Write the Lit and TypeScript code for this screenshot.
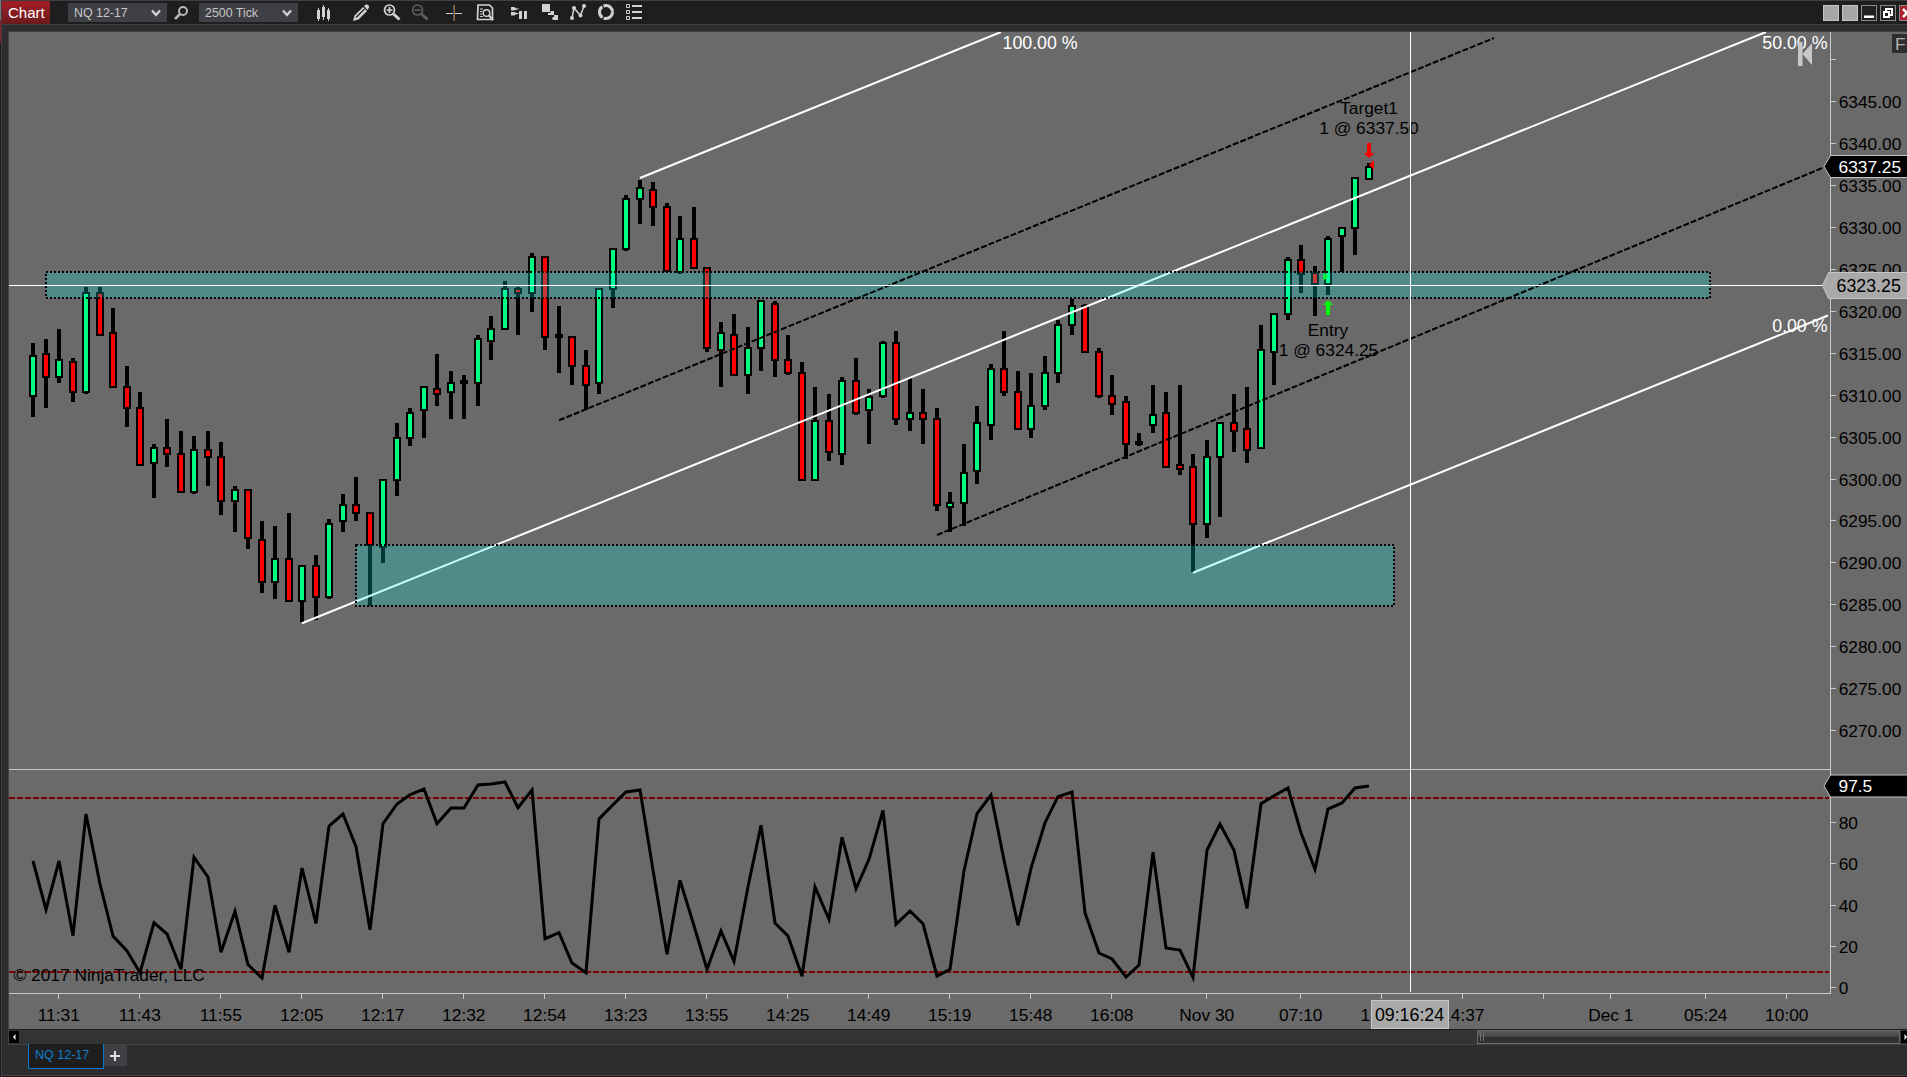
import { LitElement, html, svg, css } from "lit";
import { customElement, property } from "lit/decorators.js";

type Candle = [high: number, top: number, bottom: number, low: number, kind: "u" | "d" | "n"];

// Vertical positions of each bar on the price panel: high, body top, body bottom, low.
const CANDLES: Candle[] = [
  [343, 355, 397, 417, "u"], [339, 353, 378, 408, "d"], [329, 359, 378, 383, "u"], [358, 361, 393, 402, "d"],
  [287, 292, 393, 394, "u"], [287, 292, 336, 336, "d"], [308, 332, 388, 388, "d"], [366, 386, 409, 427, "d"],
  [392, 407, 466, 466, "d"], [444, 447, 464, 498, "u"], [419, 447, 455, 467, "d"], [431, 453, 493, 493, "d"],
  [436, 449, 493, 494, "u"], [431, 449, 458, 486, "d"], [442, 456, 502, 515, "d"], [486, 489, 502, 532, "u"],
  [489, 489, 539, 549, "d"], [521, 539, 583, 593, "d"], [526, 558, 583, 599, "u"], [513, 558, 602, 602, "d"],
  [565, 565, 602, 622, "u"], [555, 565, 598, 620, "d"], [519, 523, 598, 599, "u"], [494, 504, 522, 532, "u"],
  [477, 504, 514, 521, "d"], [512, 512, 546, 606, "d"], [479, 479, 548, 563, "u"], [423, 437, 481, 496, "u"],
  [408, 412, 439, 446, "u"], [386, 386, 411, 438, "u"], [354, 388, 395, 406, "d"], [371, 382, 393, 419, "u"],
  [375, 380, 384, 419, "n"], [335, 338, 384, 406, "u"], [316, 328, 342, 360, "u"], [281, 288, 330, 330, "u"],
  [287, 288, 294, 335, "d"], [253, 256, 294, 312, "u"], [256, 256, 338, 350, "d"], [306, 334, 338, 373, "n"],
  [336, 336, 367, 385, "d"], [350, 365, 386, 410, "d"], [288, 288, 384, 394, "u"], [248, 248, 290, 308, "u"],
  [195, 198, 250, 251, "u"], [180, 187, 200, 224, "u"], [182, 189, 208, 226, "d"], [203, 206, 272, 272, "d"],
  [216, 238, 273, 274, "u"], [207, 238, 269, 269, "d"], [267, 267, 349, 352, "d"], [322, 332, 351, 387, "u"],
  [314, 334, 376, 376, "d"], [327, 347, 376, 394, "u"], [300, 300, 349, 371, "u"], [301, 303, 361, 377, "d"],
  [335, 359, 374, 375, "d"], [362, 372, 481, 481, "d"], [387, 420, 481, 481, "u"], [394, 420, 453, 461, "d"],
  [377, 380, 455, 465, "u"], [358, 380, 414, 415, "d"], [389, 396, 411, 444, "u"], [341, 342, 397, 398, "u"],
  [331, 342, 420, 425, "d"], [378, 412, 420, 431, "u"], [389, 412, 420, 444, "d"], [408, 418, 506, 511, "d"],
  [492, 502, 508, 532, "u"], [444, 472, 504, 526, "u"], [406, 422, 472, 484, "u"], [364, 368, 426, 440, "u"],
  [331, 368, 393, 396, "d"], [371, 391, 430, 430, "d"], [373, 405, 430, 438, "u"], [356, 372, 407, 410, "u"],
  [320, 324, 374, 383, "u"], [299, 305, 326, 335, "u"], [304, 305, 353, 353, "d"], [348, 351, 397, 398, "d"],
  [375, 395, 405, 415, "d"], [396, 401, 445, 459, "d"], [433, 441, 445, 446, "n"], [385, 414, 426, 433, "u"],
  [392, 412, 468, 468, "d"], [385, 464, 470, 475, "d"], [454, 466, 525, 572, "d"], [440, 456, 525, 538, "u"],
  [422, 422, 458, 517, "u"], [394, 422, 432, 452, "d"], [387, 428, 451, 463, "d"], [325, 349, 449, 449, "u"],
  [313, 313, 353, 385, "u"], [257, 259, 315, 320, "u"], [245, 259, 275, 293, "d"], [266, 272, 285, 316, "d"],
  [236, 238, 285, 295, "u"], [227, 227, 237, 272, "u"], [177, 177, 229, 255, "u"], [163, 166, 180, 180, "u"],
];

// Oscillator samples, in thirds of a pixel below the top of the lower panel.
const OSC = [
  303, 449, 303, 527, 162, 372, 528, 573, 638, 488, 522, 628, 292, 351, 577, 454, 614, 654, 436, 577,
  324, 490, 198, 162, 260, 509, 191, 132, 104, 87, 191, 144, 144, 75, 72, 66, 143, 90, 536, 518,
  609, 638, 177, 134, 96, 90, 330, 583, 361, 497, 628, 513, 604, 380, 196, 489, 528, 649, 381, 478,
  232, 386, 298, 151, 493, 453, 491, 648, 628, 332, 161, 105, 300, 496, 325, 188, 110, 96, 458, 579,
  597, 651, 615, 277, 564, 570, 652, 271, 192, 271, 445, 131, 107, 84, 218, 328, 147, 129, 84, 78,
];

const TIMES: [number, string][] = [
  [58, "11:31"], [139, "11:43"], [220, "11:55"], [301, "12:05"], [382, "12:17"], [463, "12:32"],
  [544, "12:54"], [625, "13:23"], [706, "13:55"], [787, "14:25"], [868, "14:49"], [949, "15:19"],
  [1030, "15:48"], [1111, "16:08"], [1206, "Nov 30"], [1300, "07:10"], [1381, ""], [1462, "14:37"],
  [1543, ""], [1610, "Dec 1"], [1705, "05:24"], [1786, "10:00"],
];

const barX = (i: number) => (i === 0 ? 33 : Math.floor(46 + 13.5 * (i - 1)));

@customElement("chart-canvas")
export class ChartCanvas extends LitElement {
  static styles = css`
    :host { display: block; flex: none; height: 997px; background: #6a6a6a; }
    svg { display: block; width: 1898px; height: 997px; }
    text { font-family: "Liberation Sans", Arial, sans-serif; font-size: 17.33px; fill: #000; }
    .light { fill: #fff; }
    .mid { text-anchor: middle; }
    .end { text-anchor: end; }
    .big { font-size: 17.8px; }
    .up { fill: #00ff80; }
    .down { fill: #ff0000; }
    .axis { fill: #c8c8c8; }
    .channel { stroke: #fff; stroke-width: 2; }
    .median { stroke: #000; stroke-width: 2; stroke-dasharray: 6 2; }
    .level { stroke: #800000; stroke-width: 2; stroke-dasharray: 6 2; }
    .zone { fill: rgba(0, 255, 250, 0.22); }
    .edge { fill: none; stroke: #000; stroke-width: 2; stroke-dasharray: 2 2; }
    .osc { fill: none; stroke: #000; stroke-width: 3; }
    .cross { fill: #fff; }
    .last { fill: #000; stroke: #c8c8c8; stroke-width: 1; }
    .cursor { fill: #a9a9a9; stroke: #c8c8c8; stroke-width: 1; }
    .fixed { fill: #2d2d30; }
    .letter { fill: #b4b4b4; }
    .buy { fill: #00ff00; }
  `;

  private candle([high, top, bottom, low, kind]: Candle, i: number) {
    const x = barX(i);
    return svg`
      <rect x=${x - 2} y=${high} width="4" height=${low - high}></rect>
      <rect x=${x - 4} y=${top} width="8" height=${bottom - top}></rect>
      ${kind === "n" ? null : svg`<rect class=${kind === "u" ? "up" : "down"} x=${x - 2} y=${top + 2} width="4" height=${bottom - top - 4}></rect>`}
    `;
  }

  private priceScale() {
    return Array.from({ length: 17 }, (_, k) => {
      const y = Math.round(59.2 + 41.93 * k);
      return svg`
        <rect class="axis" x="1831" y=${y} width="5" height="1"></rect>
        ${k ? svg`<text x="1838.7" y=${y + 7}>${(6350 - 5 * k).toFixed(2)}</text>` : null}
      `;
    });
  }

  private oscScale() {
    return [0, 20, 40, 60, 80].map((v) => {
      const y = Math.round(987 - v * 2.06);
      return svg`
        <rect class="axis" x="1831" y=${y} width="5" height="1"></rect>
        <text x="1838.7" y=${y + 6.5}>${v}</text>
      `;
    });
  }

  private zone(x: number, y: number, w: number, h: number) {
    return svg`
      <rect class="zone" x=${x} y=${y} width=${w} height=${h}></rect>
      <rect class="edge" x=${x} y=${y} width=${w} height=${h}></rect>
    `;
  }

  render() {
    const osc = OSC.map((z, i) => `${barX(i)},${(760 + z / 3).toFixed(1)}`).join(" ");
    return html`
      <svg viewBox="9 32 1898 997">
        <line class="level" x1="9" y1="798" x2="1829" y2="798"></line>
        <line class="level" x1="9" y1="972" x2="1829" y2="972"></line>
        <polyline class="osc" points=${osc}></polyline>
        ${CANDLES.map((c, i) => this.candle(c, i))}

        <path class="down" d="M1367 143h4v10h3.5l-5.5 5-5.5-5h3.5z"></path>
        <path class="down" d="M1369 164.7l5-4.7v10z"></path>
        <path class="buy" d="M1323.3 272v9l4.7-4.5z"></path>
        <path class="buy" d="M1328 300l5 5h-3v10h-4v-10h-3z"></path>
        <text class="mid" x="1369" y="114">Target1</text>
        <text class="mid" x="1369" y="134">1 @ 6337.50</text>
        <text class="mid" x="1328" y="336">Entry</text>
        <text class="mid" x="1328.5" y="356">1 @ 6324.25</text>

        <line class="channel" x1="640" y1="178" x2="1001" y2="32"></line>
        <line class="channel" x1="302" y1="623.3" x2="1766" y2="32"></line>
        <line class="channel" x1="1193" y1="572.7" x2="1828" y2="315.5"></line>
        <text class="light big" x="1002.5" y="49">100.00 %</text>
        <text class="light big end" x="1827.5" y="49">50.00 %</text>
        <text class="light big end" x="1827.5" y="332">0.00 %</text>

        ${this.zone(46, 272, 1664, 26)}
        ${this.zone(356, 545, 1038, 61)}
        <line class="median" x1="559" y1="420.3" x2="1494" y2="38"></line>
        <line class="median" x1="937" y1="535" x2="1824" y2="167.3"></line>

        <rect class="axis" x="9" y="769" width="1821" height="1"></rect>
        <rect class="axis" x="1830" y="32" width="1" height="962"></rect>
        <rect class="axis" x="9" y="993" width="1822" height="1"></rect>
        ${this.priceScale()} ${this.oscScale()}
        ${TIMES.map(([x, label]) => svg`
          <rect class="axis" x=${x} y="994" width="1" height="5"></rect>
          <text class="mid" x=${x + 0.8} y="1021">${label}</text>`)}
        <text x="1360.5" y="1021">1</text>
        <text x="13.5" y="981">© 2017 NinjaTrader, LLC</text>

        <rect class="cross" x="9" y="285" width="1814" height="1"></rect>
        <rect class="cross" x="1410" y="32" width="1" height="960"></rect>

        <path class="last" d="M1824 166.5l6.5-11H1908v22H1830.500z"></path>
        <text class="light" x="1838.5" y="173">6337.25</text>
        <path class="last" d="M1824 786l6.500-11H1908v22H1830.500z"></path>
        <text class="light" x="1838.5" y="792">97.5</text>
        <path class="cursor" d="M1822.500 285.500l6-13H1908v26H1828.500z"></path>
        <text class="big" x="1836.500" y="292">6323.25</text>
        <rect class="cursor" x="1371.500" y="1000.500" width="77" height="28"></rect>
        <text class="mid big" x="1409.500" y="1021">09:16:24</text>

        <path class="axis" d="M1798 42h4.500v24h-4.500zM1812 43v22l-9.500-11z"></path>
        <rect class="fixed" x="1892" y="34" width="15" height="19"></rect>
        <text class="letter" x="1895" y="49.500">F</text>
      </svg>
    `;
  }
}

@customElement("combo-box")
export class ComboBox extends LitElement {
  @property() label = "";
  static styles = css`
    :host { display: flex; flex: none; box-sizing: border-box; width: 99px; height: 19px; background: #3f3f46;
      align-items: center; justify-content: space-between; padding: 0 6px 0 6px; color: #c8c8c8;
      font: 12.4px "Liberation Sans", Arial, sans-serif; }
    svg { width: 10px; height: 8px; fill: none; stroke: #d0d0d0; stroke-width: 2.4; }
  `;
  render() {
    return html`<span>${this.label}</span><svg viewBox="0 0 10 8"><path d="M1 1.500l4 4.500 4-4.500"></path></svg>`;
  }
}

@customElement("app-root")
export class AppRoot extends LitElement {
  static styles = css`
    :host { display: flex; width: 1907px; height: 1077px; overflow: hidden; background: #2d2d30;
      font-family: "Liberation Sans", Arial, sans-serif; }
    .outside { flex: none; width: 1px; background: linear-gradient(#777 0 20px, #8c1c20 20px 43px, #1c1c1e 43px); }
    .window { flex: 1; min-width: 0; box-sizing: border-box; display: flex; flex-direction: column; border-left: 1px solid #3f3f46; }
    .toolbar { flex: none; box-sizing: border-box; height: 25px; display: flex; align-items: center; background: #1e1e1e;
      border-top: 1px solid #3f3f46; border-bottom: 1px solid #3f3f46; }
    .title { width: 48px; height: 23px; line-height: 23px; padding-left: 6px; box-sizing: border-box; color: #fff; font-size: 15px;
      background: linear-gradient(#a41e24, #6a1a1c); }
    .first { margin-left: 18px; }
    .find { width: 16px; height: 16px; margin: 0 9px 0 7px; }
    .icons { width: 340px; height: 23px; margin-left: 12px; }
    .controls { display: flex; gap: 3px; margin-left: auto; height: 16px; }
    .ctl { box-sizing: border-box; width: 16px; height: 16px; border: 1px solid #8a8a8e; background: #232024; }
    .ctl.blank { background: #a9a6a8; border-color: #c4c2c4; }
    .ctl.close { width: 8px; background: #b0202c; border-right: 0; overflow: hidden; }
    .ctl svg { display: block; width: 14px; height: 14px; }
    .body { display: flex; flex-direction: column; margin-left: 6px; border-left: 1px solid #434346; border-top: 1px solid #434346; margin-top: 6px; }
    .scroll { height: 16px; box-sizing: border-box; display: flex; align-items: center; background: #333; border-top: 1px solid #1c1c1c;
      border-bottom: 1px solid #434346; }
    .arrow { width: 10px; height: 12px; background: #000; }
    .arrow.right { width: 6px; margin-left: 1px; overflow: hidden; }
    .arrow svg { display: block; width: 10px; height: 12px; fill: #fff; }
    .thumb { box-sizing: border-box; width: 423px; height: 14px; margin-left: auto; padding: 2px; display: flex; gap: 2px;
      border: 1px solid #6a6a6a; background: linear-gradient(#5a5a5c, #454547 50%, #2b2b2d 50%, #333); }
    .grip { width: 1px; background: #777; }
    .tabs { display: flex; align-items: flex-start; margin-left: 26px; margin-top: -1px; }
    .tab { box-sizing: border-box; width: 76px; height: 25px; border: 1px solid #007acc; border-top: 0; background: #1e1e1e;
      color: #0f7fd0; font-size: 12.500px; line-height: 23px; padding-left: 6px; white-space: nowrap; }
    .add { width: 23px; height: 21px; margin-top: 1px; background: #3f3f46; }
    .add svg { display: block; width: 23px; height: 21px; }
    .foot { margin-top: auto; height: 1px; border-top: 1px solid #434346; background: #241318; }
  `;

  private icons() {
    return html`
      <svg class="icons" viewBox="310 1 340 23" fill="none" stroke="#d2d2d2" stroke-width="1">
        <g fill="#d2d2d2" stroke="none">
          <path d="M317 10h3v9h-3zM318 8h1v13h-1zM322 7h3v10h-3zM323 5h1v15h-1zM327 10h3v9h-3zM328 8h1v13h-1z"></path>
          <path d="M353 21l1.500-5.500 8.500-8.500 4 4-8.500 8.500zM364 6l2-1.500h1.500l1.500 1.500v1.500l-1.500 2.500z"></path>
        </g>
        <path d="M356 17.500l8.500-8.500" stroke="#1e1e1e" stroke-width="1.300"></path>
        <g stroke-width="1.700">
          <circle cx="389.500" cy="10" r="5"></circle><path d="M386.500 10h6M389.500 7v6"></path><path d="M393.500 14l6 5.500" stroke-width="3"></path>
        </g>
        <g stroke="#5c5c5c" stroke-width="1.700">
          <circle cx="417.500" cy="10" r="5"></circle><path d="M414.500 10h6"></path><path d="M421.500 14l6 5.500" stroke-width="3"></path>
        </g>
        <path d="M446 13.500h16"></path>
        <path d="M453.500 5v16" stroke="#3c5a78"></path><path d="M454.500 5v16" stroke="#a8662c"></path>
        <g>
          <path d="M478 5h11.500l3 3v11.500h-15z" stroke-width="1.700"></path>
          <path d="M480 9h3M480 11.500h2M480 14h2M480 16.500h3"></path>
          <circle cx="486.500" cy="13" r="3.300" stroke-width="1.500"></circle><path d="M489 15.500l4 4.500" stroke-width="2"></path>
        </g>
        <g fill="#d2d2d2" stroke="none">
          <path d="M511 7h3l3 1.500h1.500v1h-1.500l-3 1h-3zM511 12h3l3 1h1.500v1h-1.500l-3 1.500h-3zM519 11h3v8h-3zM524 11h3v8h-3z"></path>
          <path d="M542 4h8v8h-8zM548 14v-1h2.500v-2h3.500v4h-6zM552.500 17h1.500v-2h4v5h-5.500z"></path>
          <circle cx="572" cy="18" r="2"></circle><circle cx="574" cy="8" r="2"></circle><circle cx="580.500" cy="15.500" r="2"></circle><circle cx="584" cy="6" r="2"></circle>
        </g>
        <path d="M572 18l2-10 6.500 7.500 3.500-9.500" stroke-width="1.500"></path>
        <circle cx="606" cy="12" r="6.500" stroke-width="3" stroke-dasharray="12.300 1.300"></circle>
        <path d="M626.500 4.500h3v3h-3zM626.500 10.500h3v3h-3zM626.500 16.500h3v3h-3z"></path>
        <path d="M632 6h10M632 12h10M632 18h10" stroke-width="2"></path>
      </svg>
    `;
  }

  render() {
    return html`
      <div class="outside"></div>
      <div class="window">
        <div class="toolbar">
          <div class="title">Chart</div>
          <combo-box class="first" label="NQ 12-17"></combo-box>
          <svg class="find" viewBox="0 0 16 16" fill="none" stroke="#b8b8b8" stroke-width="2"><circle cx="9" cy="6" r="4"></circle><path d="M6 9l-5 5" stroke-width="2.500"></path></svg>
          <combo-box label="2500 Tick"></combo-box>
          ${this.icons()}
          <div class="controls">
            <div class="ctl blank"></div>
            <div class="ctl blank"></div>
            <div class="ctl"><svg viewBox="0 0 14 14"><path d="M2 9.500h10v2.500H2z" fill="#fff"></path></svg></div>
            <div class="ctl"><svg viewBox="0 0 14 14" fill="none" stroke="#fff" stroke-width="2"><path d="M5 6V3h6v6H8M3 6h5v5H3z"></path></svg></div>
            <div class="ctl close"><svg viewBox="0 0 14 14" stroke="#fff" stroke-width="2.500"><path d="M3 3l8 8M11 3l-8 8"></path></svg></div>
          </div>
        </div>
        <div class="body">
          <chart-canvas></chart-canvas>
          <div class="scroll">
            <div class="arrow"><svg viewBox="0 0 10 12"><path d="M6.500 3v6L4 6z"></path></svg></div>
            <div class="thumb"><div class="grip"></div><div class="grip"></div></div>
            <div class="arrow right"><svg viewBox="0 0 10 12"><path d="M3.500 3v6L6 6z"></path></svg></div>
          </div>
        </div>
        <div class="tabs">
          <div class="tab">NQ 12-17</div>
          <div class="add"><svg viewBox="0 0 23 21"><path d="M6 11h10M11 6v10" stroke="#e0e0e0" stroke-width="2"></path></svg></div>
        </div>
        <div class="foot"></div>
      </div>
    `;
  }
}
